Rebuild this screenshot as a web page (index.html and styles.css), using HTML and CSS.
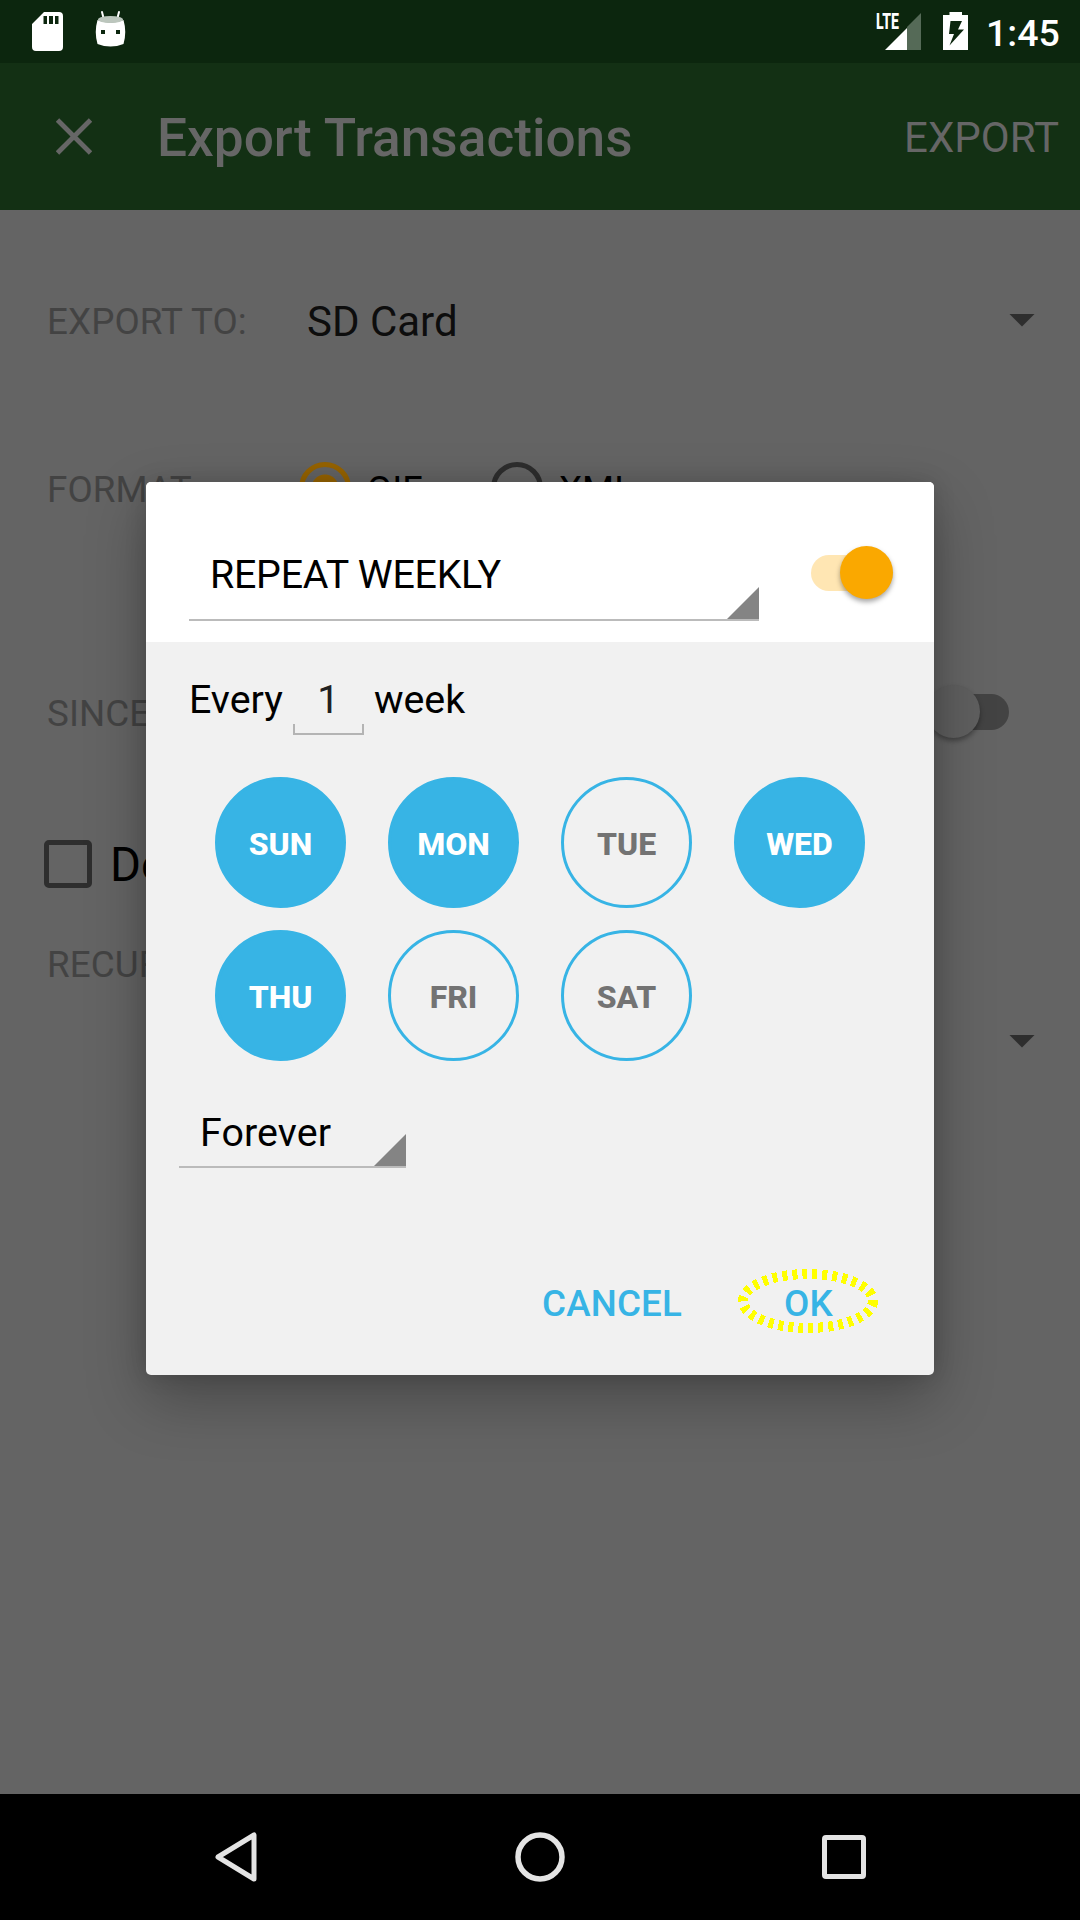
FILE: index.html
```html
<!DOCTYPE html>
<html lang="en">
<head>
<meta charset="utf-8">
<title>Export Transactions</title>
<link rel="stylesheet" href="styles.css">
</head>
<body>
<div class="screen">
  <header class="status-bar">
    <svg class="sd-icon" width="31" height="39" viewBox="0 0 31 39"><path fill="#fff" fill-rule="evenodd" d="M12 0H27Q31 0 31 4V35Q31 39 27 39H4Q0 39 0 35V12ZM11.500 4V12H15V4ZM17 4V12H21V4ZM23 4V12H26.500V4Z"/></svg>
    <svg class="droid-icon" width="31" height="38" viewBox="0 0 31 38"><path d="M7 2L8.500 8M24 2L22.500 8" stroke="#fff" stroke-width="2" stroke-linecap="round"/><path fill="#fff" fill-rule="evenodd" d="M2.500 10Q15.500 15 28.500 10Q32 22 28.500 34Q15.500 39 2.500 34Q-1 22 2.500 10ZM6 20V24H10V20ZM21 20V24H25V20Z"/><ellipse cx="15.500" cy="9.500" rx="12.500" ry="3.500" fill="#bcc6bd"/></svg>
    <div class="signal">
      <svg width="46" height="38" viewBox="0 0 46 38"><path d="M45 0V37H31V14Z" fill="#556a57"/><path d="M9 37L31 15V37Z" fill="#fff"/></svg>
      <span class="network">LTE</span>
    </div>
    <svg class="battery-icon" width="25" height="38" viewBox="0 0 25 38"><path fill="#fff" fill-rule="evenodd" d="M6.500 0H19V3H25V38H0V3H6.500ZM7.500 9L6 22H11L6.500 33.500L21 17.500H15L19 9Z"/></svg>
    <span class="clock">1:45</span>
  </header>
  <div class="app-bar">
    <svg class="close-icon" width="36" height="37" viewBox="0 0 36 37"><path d="M1.500 2L34.500 35M34.500 2L1.500 35" stroke="#666" stroke-width="4.800"/></svg>
    <h1 class="title">Export Transactions</h1>
    <span class="action">EXPORT</span>
  </div>
  <main class="form">
    <div class="row row-target"><span class="label">EXPORT TO:</span><span class="value">SD Card</span><i class="arrow"></i></div>
    <div class="row row-format"><span class="label">FORMAT:</span><i class="radio radio-on"></i><span class="option">QIF</span><i class="radio"></i><span class="option">XML</span></div>
    <div class="row row-since"><span class="label">SINCE:</span><span class="switch switch-off"><i class="thumb"></i></span></div>
    <div class="row row-delete"><i class="checkbox"></i><span class="check-label">Delete</span></div>
    <div class="row row-recurrence"><span class="label">RECURRENCE</span></div>
    <div class="row row-schedule"><i class="arrow"></i></div>
  </main>
  <nav class="nav-bar">
    <svg width="44" height="52" viewBox="0 0 44 52"><path d="M40 4V48L4 26Z" fill="none" stroke="#e4e4e4" stroke-width="5" stroke-linejoin="round"/></svg>
    <svg width="50" height="50" viewBox="0 0 50 50"><circle cx="25" cy="25" r="22" fill="none" stroke="#e4e4e4" stroke-width="5.500"/></svg>
    <svg width="44" height="44" viewBox="0 0 44 44"><rect x="2.500" y="2.500" width="39" height="39" rx="1.500" fill="none" stroke="#e4e4e4" stroke-width="5"/></svg>
  </nav>
  <section class="dialog">
    <div class="dialog-head">
      <div class="spinner spinner-wide"><span>REPEAT WEEKLY</span></div>
      <span class="switch switch-on"><i class="thumb"></i></span>
    </div>
    <div class="dialog-body">
      <div class="interval"><span>Every</span><span class="count">1</span><span>week</span></div>
      <div class="days">
        <span class="day on">SUN</span><span class="day on">MON</span><span class="day">TUE</span><span class="day on">WED</span>
        <span class="day on">THU</span><span class="day">FRI</span><span class="day">SAT</span>
      </div>
      <div class="spinner spinner-end"><span>Forever</span></div>
      <div class="buttons">
        <span class="button">CANCEL</span>
        <span class="button ok">OK
          <svg class="ring" width="144" height="68" viewBox="0 0 144 68"><ellipse cx="72" cy="34" rx="65" ry="27" fill="none" stroke="#ff0" stroke-width="10" stroke-dasharray="5 5" shape-rendering="crispEdges"/></svg>
        </span>
      </div>
    </div>
  </section>
</div>
</body>
</html>
```
FILE: styles.css
```css
* { box-sizing: border-box; }
body { margin: 0; background: #646464; font-family: Roboto, "Noto Sans", sans-serif; }
svg { display: block; }
.screen { position: relative; width: 1080px; height: 1920px; display: flex; flex-direction: column; overflow: hidden; white-space: nowrap; }

.status-bar { height: 63px; flex: none; display: flex; align-items: flex-start; background: #0c260e; padding-left: 32px; color: #fff; }
.sd-icon { margin-top: 12px; }
.droid-icon { margin: 10px 0 0 32px; }
.signal { position: relative; margin: 13px 0 0 750px; }
.network { position: absolute; left: 0; top: -2px; font-size: 22px; line-height: 22px; font-weight: 800; transform: scaleX(.64); transform-origin: 0 0; }
.battery-icon { margin: 12px 0 0 21px; }
.clock { margin-left: 18px; font-size: 37.500px; font-weight: 500; line-height: 66px; }

.app-bar { height: 147px; flex: none; display: flex; align-items: center; background: #133014; color: #666; padding: 0 21px 0 56px; }
.title { margin: 2px 0 0 65px; font-size: 53.200px; font-weight: 500; line-height: 62px; }
.action { margin: 2px 0 0 auto; font-size: 42px; }

.form { flex: 1; display: flex; flex-direction: column; background: #646464; }
.row { display: flex; align-items: center; padding: 0 45px 0 47px; flex: none; }
.label { width: 260px; font-size: 36.750px; letter-spacing: .1px; color: #434343; }
.value { font-size: 42px; color: #0d0d0d; }
.arrow { width: 26px; height: 13px; margin-left: auto; background: #2e2e2e; clip-path: polygon(0 0, 100% 0, 50% 100%); }
.row-target { height: 222px; }
.row-target .arrow { margin-bottom: 2px; }
.row-format { height: 114px; }
.row-format .label { width: 252px; }
.row-since { height: 135px; margin-top: 100px; padding-right: 71px; }
.row-since .switch { margin-bottom: 3px; }
.row-delete { height: 166px; padding-left: 44px; }
.row-recurrence { height: 34px; }
.row-schedule { height: 120px; }
.radio { width: 52px; height: 52px; margin-bottom: 2px; border: 5.500px solid #2e2e2e; border-radius: 50%; }
.radio-on { border-color: #966300; background: radial-gradient(circle, #966300 13px, transparent 14px); }
.option { width: 124px; margin-left: 16px; font-size: 36.750px; color: #000; }
.checkbox { width: 48px; height: 48px; border: 5.500px solid #2e2e2e; border-radius: 5px; }
.check-label { margin: 2px 0 0 18px; font-size: 47.250px; color: #000; }

.switch { position: relative; width: 82px; height: 36px; margin-left: auto; border-radius: 18px; }
.thumb { position: absolute; top: -9px; width: 53px; height: 53px; border-radius: 50%; box-shadow: 0 3px 5px rgba(0,0,0,.35); }
.switch-on { background: #ffe6b3; }
.switch-on .thumb { right: 0; background: #faa800; }
.switch-off { background: #434343; }
.switch-off .thumb { left: 0; background: #5f5f5f; }

.nav-bar { height: 126px; flex: none; display: flex; align-items: center; justify-content: space-between; background: #000; padding: 0 214px; }

.dialog { position: absolute; left: 146px; top: 482px; width: 788px; height: 893px; border-radius: 5px; background: #f1f1f1; color: #000; font-size: 39.375px; box-shadow: 0 24px 60px rgba(0,0,0,.28), 0 0 22px rgba(0,0,0,.14); }
.dialog-head { height: 160px; display: flex; padding: 0 41px 0 43px; background: #fff; border-radius: 5px 5px 0 0; }
.dialog-head .switch { margin-top: 73px; }
.spinner { display: flex; align-items: flex-end; border-bottom: 2px solid #bbb; }
.spinner::after { content: ""; width: 32px; height: 32px; margin-left: auto; background: #848484; clip-path: polygon(100% 0, 100% 100%, 0 100%); }
.spinner span { line-height: 46px; }
.spinner-wide { width: 570px; height: 139px; padding-left: 21px; letter-spacing: -.25px; }
.spinner-wide span { margin-bottom: 21px; }
.dialog-body { display: flex; flex-direction: column; padding-left: 43px; }
.interval { display: flex; height: 92px; }
.interval span { line-height: 46px; margin-top: 35px; }
.interval .count { width: 71px; height: 58px; margin: 35px 10px 0; border: solid #b4b4b4; border-width: 0 2px 2px; border-image: linear-gradient(transparent 47px, #b4b4b4 47px) 2; text-align: center; color: #212121; }
.days { display: grid; grid-template-columns: repeat(4, 131px); gap: 22px 42px; margin: 43px 0 0 26px; }
.day { height: 131px; border: 3px solid #37b4e5; border-radius: 50%; display: flex; align-items: center; justify-content: center; font-size: 32px; font-weight: 800; color: #737373; padding-top: 2px; }
.day.on { background: #37b4e5; color: #fff; }
.spinner-end { width: 227px; height: 64px; margin: 43px 0 0 -10px; padding-left: 21px; letter-spacing: .1px; }
.spinner-end span { margin-bottom: 10px; }
.buttons { display: flex; margin: 113px 0 0 353px; font-size: 36.750px; font-weight: 500; line-height: 46px; letter-spacing: .15px; color: #37b4e5; }
.button { position: relative; }
.ok { margin-left: 102px; }
.ring { position: absolute; left: -48px; top: -14px; }
```
